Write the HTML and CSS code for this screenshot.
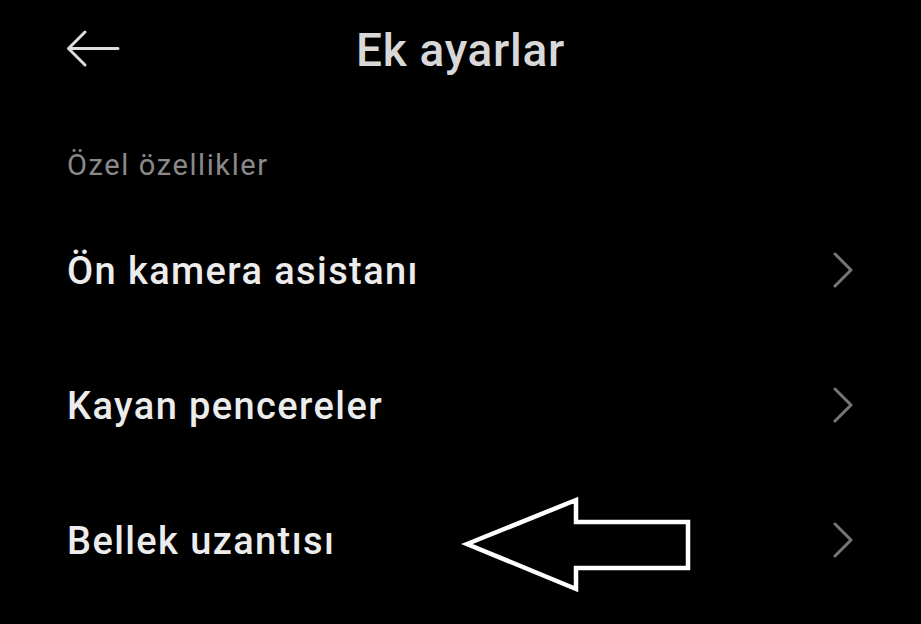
FILE: index.html
```html
<!DOCTYPE html>
<html lang="tr">
<head>
<meta charset="utf-8">
<title>Ek ayarlar</title>
<link rel="stylesheet" href="styles.css">
</head>
<body>
<div class="screen">
  <header class="topbar">
    <svg class="back" width="54" height="40" viewBox="0 0 54 40" aria-hidden="true">
      <path d="M52 19.5H3M19 3L2.5 19.5L19 36" fill="none" stroke="#dedede" stroke-width="3" stroke-linecap="round" stroke-linejoin="round"/>
    </svg>
    <h1 class="title">Ek ayarlar</h1>
  </header>

  <div class="section-label">Özel özellikler</div>

  <ul class="list">
    <li class="row">
      <span class="row-text">Ön kamera asistanı</span>
      <svg class="chevron" width="22" height="36" viewBox="0 0 22 36" aria-hidden="true"><path d="M3 2L19 18L3 34" fill="none" stroke="#767676" stroke-width="3" stroke-linecap="round" stroke-linejoin="round"/></svg>
    </li>
    <li class="row">
      <span class="row-text">Kayan pencereler</span>
      <svg class="chevron" width="22" height="36" viewBox="0 0 22 36" aria-hidden="true"><path d="M3 2L19 18L3 34" fill="none" stroke="#767676" stroke-width="3" stroke-linecap="round" stroke-linejoin="round"/></svg>
    </li>
    <li class="row">
      <span class="row-text">Bellek uzantısı</span>
      <svg class="chevron" width="22" height="36" viewBox="0 0 22 36" aria-hidden="true"><path d="M3 2L19 18L3 34" fill="none" stroke="#767676" stroke-width="3" stroke-linecap="round" stroke-linejoin="round"/></svg>
    </li>
  </ul>

  <!-- hand-drawn pointer beside the last row -->
  <svg class="pointer" width="921" height="624" viewBox="0 0 921 624" aria-hidden="true">
    <path d="M467 544L576 500V522H688V568H576V589Z" fill="none" stroke="#ffffff" stroke-width="4.5" stroke-linejoin="miter"/>
  </svg>
</div>
</body>
</html>
```

FILE: styles.css
```css
html, body {
  margin: 0;
  background: #000;
}

.screen {
  position: relative;
  width: 921px;
  height: 624px;
  overflow: hidden;
  font-family: Roboto, "Noto Sans", "Liberation Sans", sans-serif;
  display: flex;
  flex-direction: column;
}

.topbar {
  height: 100px;
  display: flex;
  align-items: center;
  justify-content: center;
  position: relative;
}

.back {
  position: absolute;
  left: 66px;
  top: 29px;
}

.title {
  margin: 0;
  font-size: 46px;
  font-weight: 500;
  color: #d8d8d8;
  letter-spacing: 0.7px;
}

.section-label {
  padding: 45px 0 0 67px;
  font-size: 29px;
  line-height: 40px;
  letter-spacing: 1.6px;
  color: #8a8a8a;
}

.list {
  list-style: none;
  margin: 18px 0 0 0;
  padding: 0;
}

.row {
  height: 135px;
  display: flex;
  align-items: center;
  justify-content: space-between;
  padding: 0 67px 0 67px;
}

.row-text {
  font-size: 38px;
  font-weight: 500;
  letter-spacing: 1.4px;
  color: #ececec;
}

.chevron {
  margin-top: -2px;
}

.pointer {
  position: absolute;
  left: 0;
  top: 0;
}
```
